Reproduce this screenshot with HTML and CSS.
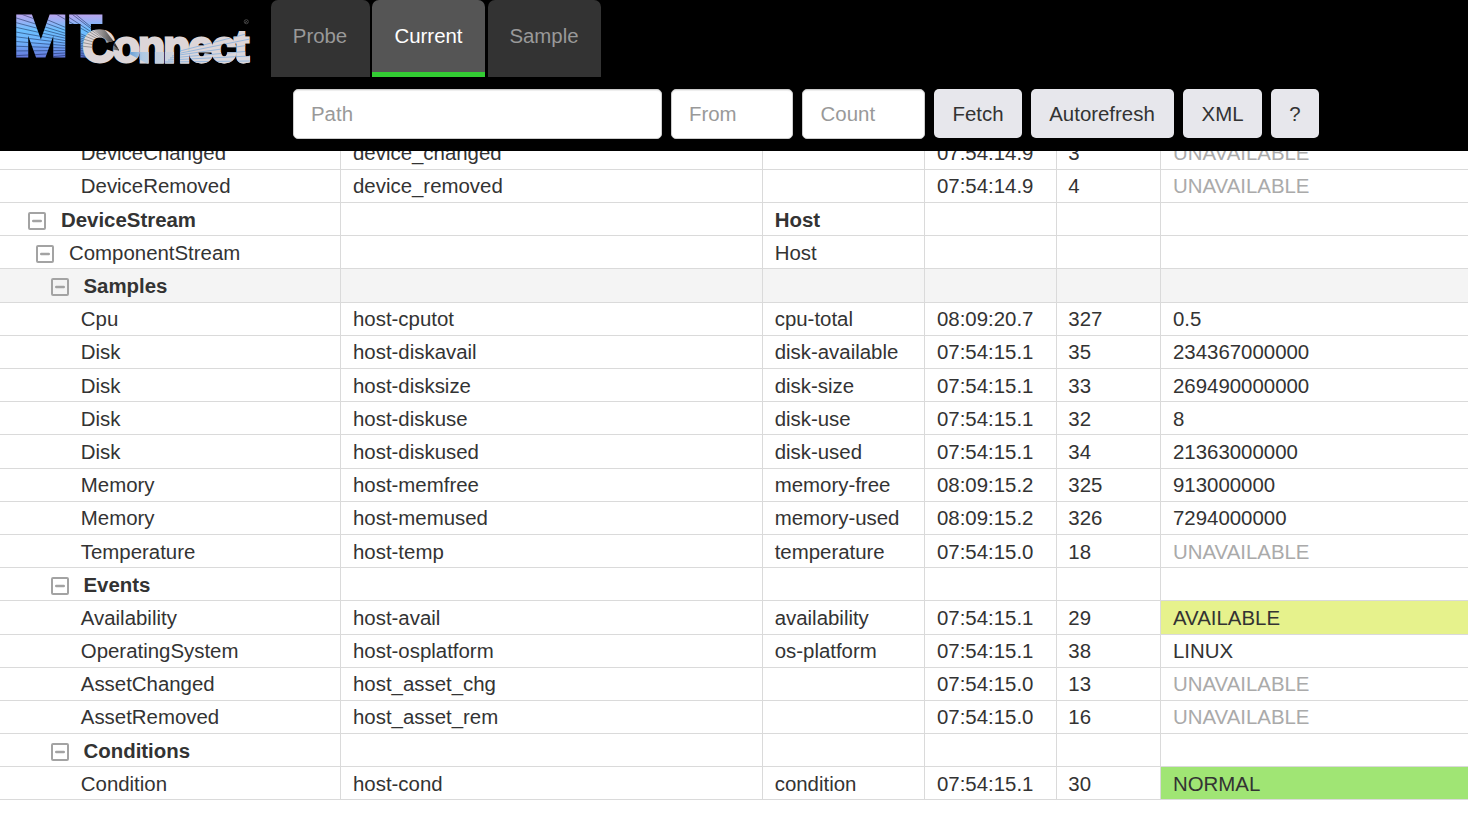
FILE: index.html
```html
<!DOCTYPE html>
<html lang="en">
<head>
<meta charset="utf-8">
<title>MTConnect</title>
<link rel="stylesheet" href="styles.css">
</head>
<body>
<header class="header">
  <svg class="logo" viewBox="0 0 271 80" role="img" aria-label="MTConnect">
    <defs>
      <linearGradient id="sky" x1="0" y1="15" x2="0" y2="57" gradientUnits="userSpaceOnUse">
        <stop offset="0" stop-color="#b9a6ee"/><stop offset=".35" stop-color="#6cc0ff"/><stop offset=".65" stop-color="#6fb2fd"/><stop offset="1" stop-color="#6478da"/>
      </linearGradient>
      <linearGradient id="ray" x1="84" y1="0" x2="119" y2="0" gradientUnits="userSpaceOnUse">
        <stop offset="0" stop-color="#999" stop-opacity=".1"/><stop offset="1" stop-color="#111"/>
      </linearGradient>
      <linearGradient id="beam" x1="126" y1="0" x2="180" y2="0" gradientUnits="userSpaceOnUse">
        <stop offset="0" stop-color="#4f91d4"/><stop offset=".3" stop-color="#b0c9e2"/><stop offset="1" stop-color="#dad7dc"/>
      </linearGradient>
      <mask id="mt" maskUnits="userSpaceOnUse" x="0" y="0" width="271" height="80"><use href="#mt-text" fill="#fff" stroke="#fff"/></mask>
      <mask id="con" maskUnits="userSpaceOnUse" x="0" y="0" width="271" height="80"><use href="#con-text" fill="#fff" stroke="#fff"/></mask>
      <g id="mt-text">
        <text class="mt" x="13.8" y="55.5" textLength="54" lengthAdjust="spacingAndGlyphs">M</text>
        <text class="mt" x="70" y="55.5" textLength="31.5" lengthAdjust="spacingAndGlyphs">T</text>
      </g>
      <text id="con-text" class="connect" x="82.5" y="62.2" textLength="166.5" lengthAdjust="spacing">Connect</text>
    </defs>
    <use href="#mt-text" fill="url(#sky)" stroke="url(#sky)"/>
    <g mask="url(#mt)"><path class="rays" d="M119 50L10 4M119 50L10 10M119 50L10 16M119 50L10 21M119 50L10 26M119 50L10 31M119 50L10 36M119 50L10 41M119 50L10 46M119 50L10 51M119 50L10 56M119 50L10 61M119 50L10 66M119 50L10 71M119 50L10 76M119 50L40 5M119 50L50 5M119 50L60 5M119 50L68 8"/></g>
    <use href="#con-text" fill="#ddd6d8" stroke="#ddd6d8"/>
    <g mask="url(#con)">
      <path fill="url(#ray)" d="M119 50L84 23L105 30L115 43Z"/>
      <path class="c-rays" d="M119 50L80 22M119 50L80 26M119 50L80 30M119 50L80 34M119 50L80 38M119 50L80 42M119 50L80 46"/>
      <path fill="url(#beam)" d="M126 52L250 52L250 68L155 68Z"/>
      <path class="blue-rays" d="M180 51L250 33M176 54L250 39M172 56L250 45M170 58L250 51M168 60L250 56M165 62L250 61"/>
    </g>
    <g class="mark"><circle cx="246.3" cy="21.7" r="2.1"/><path d="M245 20.4l2.6 2.6m0-2.6L245 23"/></g>
  </svg>
  <div class="controls">
    <nav class="tabs">
      <a class="tab tab-probe">Probe</a>
      <a class="tab tab-active">Current</a>
      <a class="tab tab-sample">Sample</a>
    </nav>
    <form class="toolbar">
      <input class="field field-path" type="text" placeholder="Path">
      <input class="field field-from" type="text" placeholder="From">
      <input class="field field-count" type="text" placeholder="Count">
      <button class="button fetch" type="button">Fetch</button>
      <button class="button auto" type="button">Autorefresh</button>
      <button class="button xml" type="button">XML</button>
      <button class="button help" type="button">?</button>
    </form>
  </div>
</header>
<main class="viewport"><div class="rows" id="rows"></div></main>
<script src="app.js"></script>
</body>
</html>
```
FILE: styles.css
```css
* { box-sizing: border-box; }
body {
  margin: 0;
  height: 815px;
  overflow: hidden;
  display: flex;
  flex-direction: column;
  background: #fff;
  color: #333;
  font: 20.42px "Liberation Sans", Arial, sans-serif;
}
.header { display: flex; flex: 0 0 151px; background: #000; }
.logo { width: 271px; height: 80px; flex: none; }
.mt { font: bold 57px "Liberation Sans", Arial, sans-serif; stroke-width: 3.2; }
.connect { font: bold 44.5px "Liberation Sans", Arial, sans-serif; stroke-width: 2.8; }
.rays { stroke: #10204a; stroke-width: .6; stroke-opacity: .85; }
.c-rays { stroke: #555; stroke-width: .5; }
.blue-rays { stroke: #79a9dc; stroke-width: .7; fill: none; }
.mark { fill: none; stroke: #555; stroke-width: .7; }
.controls { display: flex; flex-direction: column; }
.tabs { display: flex; height: 77px; gap: 2px; }
.tab {
  height: 77px;
  padding-top: 24px;
  line-height: 24px;
  text-align: center;
  background: #333;
  color: #999;
  border-radius: 7px 7px 0 0;
}
.tab-probe { width: 99px; padding-right: 1px; }
.tab-active { width: 113px; background: #555; color: #fff; border-bottom: 5px solid #3c3; }
.tab-sample { width: 113px; margin-left: 1px; padding-right: 1px; }
.toolbar { display: flex; align-items: flex-start; gap: 9px; margin: 12px 0 0 22px; }
.field, .button { font: inherit; border-radius: 5px; padding: 0; margin: 0; }
.field {
  height: 50px;
  padding: 0 17px;
  border: 1px solid #ccc;
  background: #fff;
  box-shadow: inset 0 1px 1px rgba(0, 0, 0, .075);
}
.field::placeholder { color: #999; opacity: 1; }
.field-path { width: 369px; }
.field-from { width: 122px; }
.field-count { width: 123px; padding-left: 17.6px; }
.button { height: 49px; padding-top: 2px; border: 0; background: #e7e7ec; color: #333; }
.fetch { width: 88px; }
.auto { width: 143px; padding-right: 1px; }
.xml { width: 79px; }
.help { width: 48px; }
.viewport { flex: 1; min-height: 0; overflow: hidden; }
.rows { margin-top: -14.28px; }
.row {
  display: grid;
  grid-template-columns: 341px 422px 162px 132px 104px 1fr;
  height: 33.1875px;
}
.cell {
  display: flex;
  align-items: center;
  padding: 1.875px 0 0 12px;
  border-right: 1px solid #dadada;
  border-bottom: 1px solid #dadada;
  white-space: nowrap;
}
.cell:nth-child(3) { padding-left: 11.7px; }
.cell:nth-child(5) { padding-left: 11.3px; }
.cell:last-child { border-right: 0; }
.leaf .cell:first-child { padding-left: 80.8px; }
.device .cell:first-child { padding-left: 28px; }
.component .cell:first-child { padding-left: 36px; }
.category .cell:first-child { padding-left: 51px; }
.device, .category { font-weight: bold; }
.highlight { background: #f4f4f4; }
.toggle { width: 18px; height: 18px; flex: none; margin: 1.5px 15px 0 0; }
.category .toggle { margin-right: 14.5px; }
.toggle rect { fill: none; stroke: #a3a3a3; stroke-width: 2; }
.toggle path { stroke: #a3a3a3; stroke-width: 2.4; stroke-linecap: round; }
.unavailable { color: #aaa; }
.available { background: #e6f28c; }
.normal { background: #a0e574; }
```
FILE: app.js
```js
// Each entry: row kind, then the six cell values.
const data = [
  ["leaf", "DeviceChanged", "device_changed", "", "07:54:14.9", "3", "UNAVAILABLE"],
  ["leaf", "DeviceRemoved", "device_removed", "", "07:54:14.9", "4", "UNAVAILABLE"],
  ["device", "DeviceStream", "", "Host", "", "", ""],
  ["component", "ComponentStream", "", "Host", "", "", ""],
  ["category highlight", "Samples", "", "", "", "", ""],
  ["leaf", "Cpu", "host-cputot", "cpu-total", "08:09:20.7", "327", "0.5"],
  ["leaf", "Disk", "host-diskavail", "disk-available", "07:54:15.1", "35", "234367000000"],
  ["leaf", "Disk", "host-disksize", "disk-size", "07:54:15.1", "33", "269490000000"],
  ["leaf", "Disk", "host-diskuse", "disk-use", "07:54:15.1", "32", "8"],
  ["leaf", "Disk", "host-diskused", "disk-used", "07:54:15.1", "34", "21363000000"],
  ["leaf", "Memory", "host-memfree", "memory-free", "08:09:15.2", "325", "913000000"],
  ["leaf", "Memory", "host-memused", "memory-used", "08:09:15.2", "326", "7294000000"],
  ["leaf", "Temperature", "host-temp", "temperature", "07:54:15.0", "18", "UNAVAILABLE"],
  ["category", "Events", "", "", "", "", ""],
  ["leaf", "Availability", "host-avail", "availability", "07:54:15.1", "29", "AVAILABLE"],
  ["leaf", "OperatingSystem", "host-osplatform", "os-platform", "07:54:15.1", "38", "LINUX"],
  ["leaf", "AssetChanged", "host_asset_chg", "", "07:54:15.0", "13", "UNAVAILABLE"],
  ["leaf", "AssetRemoved", "host_asset_rem", "", "07:54:15.0", "16", "UNAVAILABLE"],
  ["category", "Conditions", "", "", "", "", ""],
  ["leaf", "Condition", "host-cond", "condition", "07:54:15.1", "30", "NORMAL"]
];
const toggle = '<svg class="toggle" viewBox="0 0 18 18"><rect x="1" y="1" width="16" height="16" rx="1"/><path d="M5.2 9h7.6"/></svg>';
const states = { UNAVAILABLE: "unavailable", AVAILABLE: "available", NORMAL: "normal" };
document.getElementById("rows").innerHTML = data.map(([kind, ...cells]) =>
  `<div class="row ${kind}">` + cells.map((text, i) =>
    `<div class="cell ${states[text] || ""}">${i === 0 && kind !== "leaf" ? toggle : ""}<span>${text}</span></div>`
  ).join("") + "</div>"
).join("");
```
